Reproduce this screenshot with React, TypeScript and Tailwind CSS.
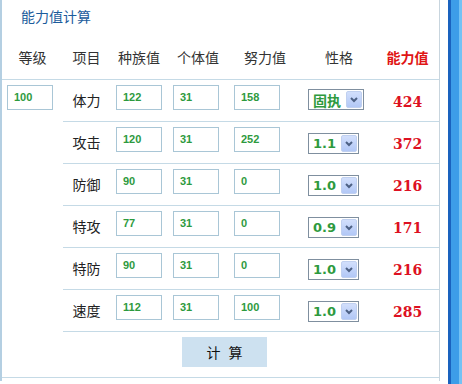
import React from "react";

const rows = [
  { label: "体力", race: "122", iv: "31", ev: "158", nat: "固执", val: "424" },
  { label: "攻击", race: "120", iv: "31", ev: "252", nat: "1.1", val: "372" },
  { label: "防御", race: "90", iv: "31", ev: "0", nat: "1.0", val: "216" },
  { label: "特攻", race: "77", iv: "31", ev: "0", nat: "0.9", val: "171" },
  { label: "特防", race: "90", iv: "31", ev: "0", nat: "1.0", val: "216" },
  { label: "速度", race: "112", iv: "31", ev: "100", nat: "1.0", val: "285" },
];

const cjk = { fontFamily: '"Noto Sans CJK SC", "Noto Sans", sans-serif' };

function Box({ v }: { v: string }) {
  return (
    <div
      className="w-[46px] h-[25px] border border-[#a9c6d6] bg-white flex items-center pl-[6px] text-[11px] font-bold text-[#2e9a3e] leading-none"
      style={{ fontFamily: '"Liberation Sans", Arial, sans-serif' }}
    >
      {v}
    </div>
  );
}

function Sel({ v, first }: { v: string; first: boolean }) {
  return (
    <div
      className={
        first
          ? "w-[56px] h-[21px] border border-[#7f8f9f] bg-white flex items-center justify-between pl-[4px] pr-[1px]"
          : "w-[51px] h-[21px] border border-[#7f8f9f] bg-white flex items-center justify-between pl-[4px] pr-[1px]"
      }
    >
      {first ? (
        <span className="text-[14px] font-bold text-[#2e9a3e] leading-none" style={cjk}>
          {v}
        </span>
      ) : (
        <span
          className="text-[13px] font-bold text-[#2e9a3e] leading-none"
          style={{ fontFamily: '"DejaVu Sans", Verdana, sans-serif' }}
        >
          {v}
        </span>
      )}
      <div className="w-[16px] h-[17px] rounded-[2px] bg-gradient-to-b from-[#d2dffc] to-[#b2c8f6] border border-[#c0d0f0] flex items-center justify-center">
        <svg width="8" height="6" viewBox="0 0 8 6">
          <polyline points="1,1 4,4 7,1" fill="none" stroke="#4d6185" strokeWidth="2" />
        </svg>
      </div>
    </div>
  );
}

export default function App() {
  return (
    <div className="w-[462px] h-[384px] bg-white flex overflow-hidden" style={cjk}>
      <div className="w-[440px] h-[381px] border-l-2 border-r border-l-[#b4cfe2] border-r-[#c8d5de] flex flex-col">
        <div className="h-[36px] pt-[8px] pl-[19px] text-[14px] leading-[17px] text-[#1c5c9c]">能力值计算</div>
        <div className="h-[44px] border-b border-[#c5dae6] flex items-center text-[14px] text-[#333]">
          <div className="w-[61px] text-center">等级</div>
          <div className="w-[47px] text-center">项目</div>
          <div className="w-[58px] text-center">种族值</div>
          <div className="w-[60px] text-center">个体值</div>
          <div className="w-[74px] text-center">努力值</div>
          <div className="w-[74px] text-center">性格</div>
          <div className="flex-1 text-center font-bold text-[#e01515]">能力值</div>
        </div>
        <div className="flex">
          <div className="w-[61px] pl-[5px] pt-[5px]">
            <Box v="100" />
          </div>
          <div className="w-[376px] flex flex-col">
            {rows.map((r, i) => (
              <div key={r.label} className="h-[42px] border-b border-[#c5dae6] flex items-start">
                <div className="w-[47px] mt-[10px] leading-[20px] text-[14px] text-[#222] text-center">{r.label}</div>
                <div className="ml-[6px] mt-[5px]">
                  <Box v={r.race} />
                </div>
                <div className="ml-[11px] mt-[5px]">
                  <Box v={r.iv} />
                </div>
                <div className="ml-[15px] mt-[5px]">
                  <Box v={r.ev} />
                </div>
                <div className={i === 0 ? "w-[98px] pl-[28px] mt-[9px]" : "w-[98px] pl-[28px] mt-[11px]"}>
                  <Sel v={r.nat} first={i === 0} />
                </div>
                <div
                  className="ml-[15px] mt-[12px] leading-[20px] text-[14px] font-bold text-[#dd1122]"
                  style={{ fontFamily: '"DejaVu Serif", serif' }}
                >
                  {r.val}
                </div>
              </div>
            ))}
          </div>
        </div>
        <div className="mt-[5px] ml-[180px] w-[85px] h-[30px] bg-[#cde1f0] flex items-center justify-center gap-[8px] text-[14px] text-[#111]">
          <span>计</span>
          <span>算</span>
        </div>
        <div className="mt-[10px] h-px bg-[#c5dae6]" />
      </div>
      <div className="ml-[8px] flex h-full">
        <div className="w-[3px] bg-[#1a62be]" />
        <div className="w-[8px] bg-[#3d9de8]" />
        <div className="w-[3px] bg-[#74c2f4]" />
      </div>
    </div>
  );
}
